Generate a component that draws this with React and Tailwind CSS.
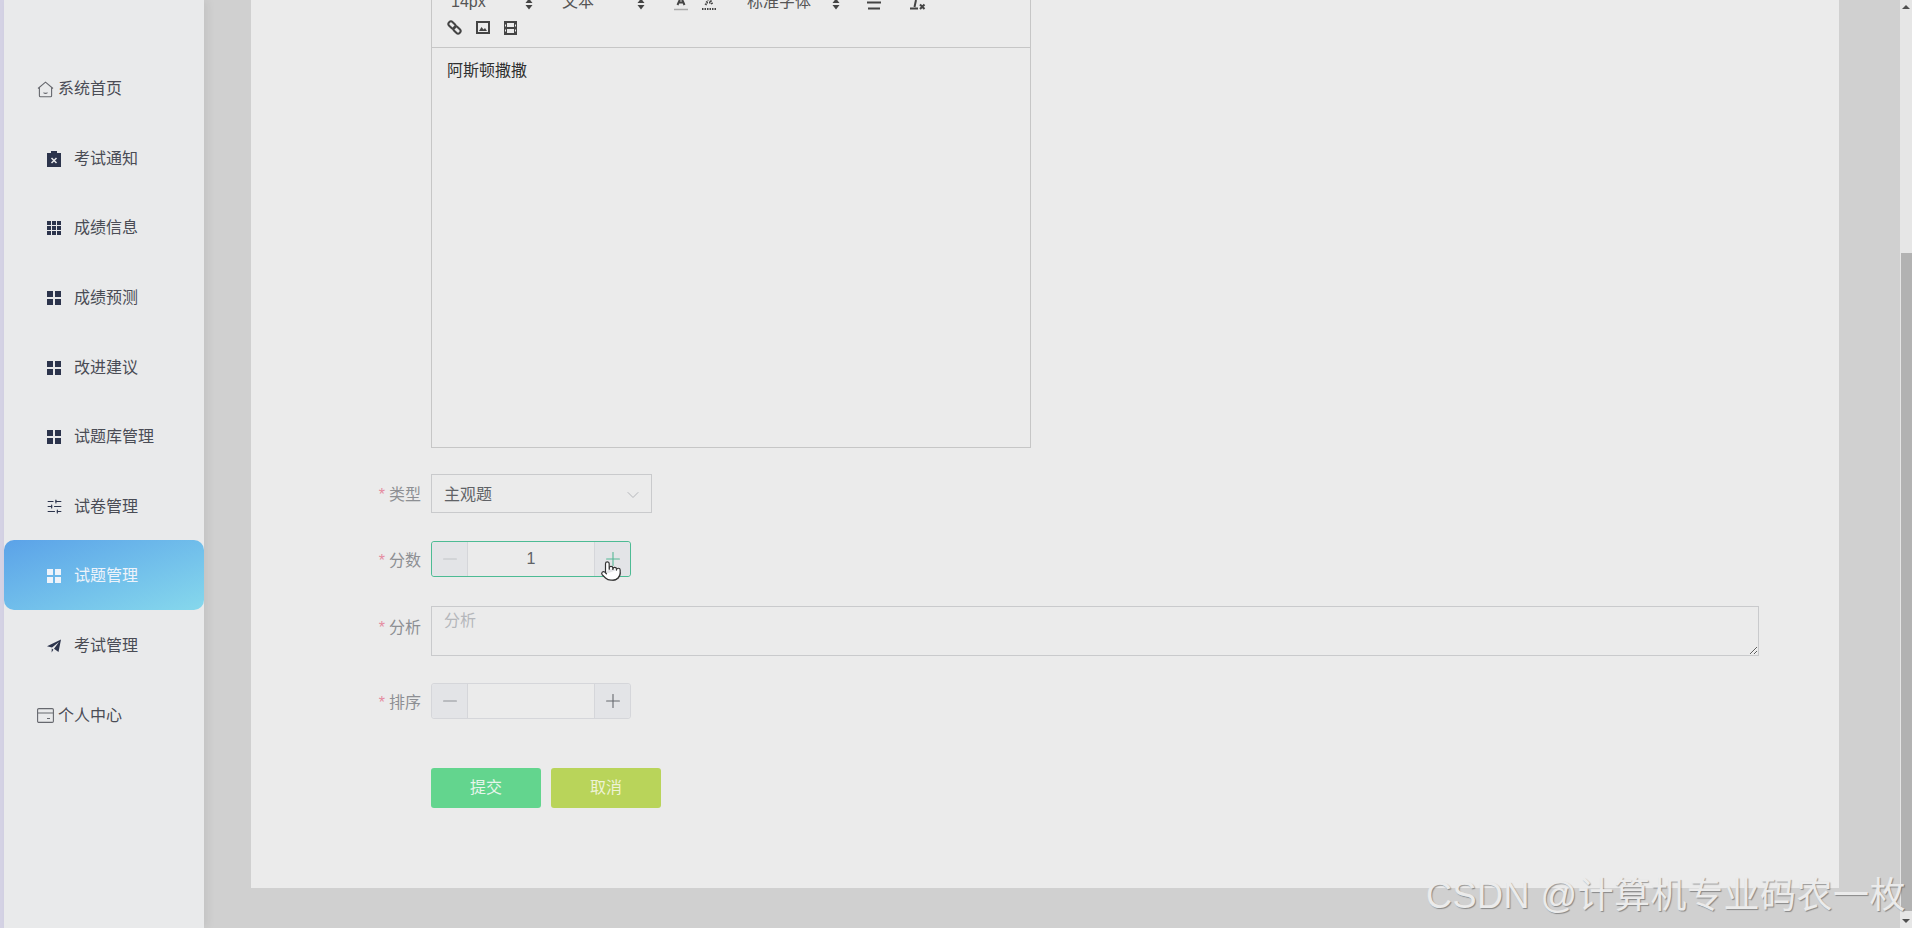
import { ChevronDown, Minus, Plus, Pointer, SlidersHorizontal } from 'lucide-react';

const fontStack = { fontFamily: '"Liberation Sans", "Noto Sans CJK SC", sans-serif' };

// 侧边栏小图标
const HomeIcon = () => (
  <svg width="17" height="17" viewBox="0 0 17 17" fill="none" stroke="#66686e" strokeWidth="1.1">
    <path d="M1 7.5 8.5 1.2 16 7.5M2.4 6.6v8.2c0 .6.4 1 1 1h10.200c.6 0 1-.4 1-1V6.6" />
    <path d="M6.5 11.6c1.2.9 2.8.9 4 0" />
  </svg>
);

const CardIcon = () => (
  <svg width="17" height="15" viewBox="0 0 17 15" fill="none" stroke="#66686e" strokeWidth="1.1">
    <rect x="0.6" y="0.6" width="15.8" height="13.8" rx="1.2" />
    <path d="M.6 5h15.8M10 10.5h3" />
  </svg>
);

const ClipboardIcon = () => (
  <svg width="14" height="16" viewBox="0 0 14 16">
    <path fill="#2c344c" d="M4 0h6v2h4v14H0V2h4z" />
    <path stroke="#e9eaeb" strokeWidth="1.5" d="m4.5 7 5 5m0-5-5 5" />
  </svg>
);

const GridNineIcon = () => (
  <svg width="14" height="14" viewBox="0 0 14 14" fill="#2c344c">
    {[0, 5, 10].map((y) =>
      [0, 5, 10].map((x) => <rect key={`${x}-${y}`} x={x} y={y} width="4" height="4" />)
    )}
  </svg>
);

const GridFourIcon = ({ color = '#2c344c' }) => (
  <svg width="14" height="14" viewBox="0 0 14 14" fill={color}>
    <rect width="6" height="6" />
    <rect x="8" width="6" height="6" />
    <rect y="8" width="6" height="6" />
    <rect x="8" y="8" width="6" height="6" />
  </svg>
);

const SendIcon = () => (
  <svg width="14" height="14" viewBox="0 0 14 14" fill="#2c344c">
    <path d="M14 .5 11.5 13 7 9.8 12 3 5 8.6 0 7.2zM4.8 9.6 6.4 10.8 4.6 13.4z" />
  </svg>
);

const menus = [
  { name: '系统首页', icon: <HomeIcon />, top: true },
  { name: '考试通知', icon: <ClipboardIcon /> },
  { name: '成绩信息', icon: <GridNineIcon /> },
  { name: '成绩预测', icon: <GridFourIcon /> },
  { name: '改进建议', icon: <GridFourIcon /> },
  { name: '试题库管理', icon: <GridFourIcon /> },
  { name: '试卷管理', icon: <SlidersHorizontal size={17} color="#2c344c" strokeWidth={1.6} /> },
  { name: '试题管理', icon: <GridFourIcon color="#eef3fa" />, active: true },
  { name: '考试管理', icon: <SendIcon /> },
  { name: '个人中心', icon: <CardIcon />, top: true },
];

const Sidebar = () => (
  <aside className="w-[200px] shrink-0 bg-[#e9eaeb] pt-[53px] flex flex-col shadow-[4px_0_8px_rgba(0,0,0,0.06)] z-10">
    {menus.map((it) => (
      <div
        key={it.name}
        className={`h-[69.6px] pt-[3px] flex items-center text-[16px] rounded-[10px] ${
          it.active
            ? 'bg-gradient-to-br from-[#5ba2e8] to-[#86d8ec] text-[#eef3fa]'
            : 'text-[#4a4c55]'
        } ${it.top ? 'pl-[33px] gap-[4px]' : 'pl-[39px]'}`}
      >
        <span className={`flex justify-center ${it.top ? '' : 'w-[22px] mr-[9px]'}`}>{it.icon}</span>
        {it.name}
      </div>
    ))}
  </aside>
);

const Sort = ({ className = '' }) => (
  <svg width="8" height="12" viewBox="0 0 8 12" fill="#444" className={`absolute top-[-2px] ${className}`}>
    <path d="M.5 5h7L4 .5zM.5 7h7L4 11.500z" />
  </svg>
);

const Toolbar = () => (
  <div className="h-[48px] border-b border-[#c6c6c6] relative text-[16px] text-[#555]">
    <span className="absolute left-[19px] top-[-10px]">14px</span>
    <Sort className="left-[93px]" />
    <span className="absolute left-[130px] top-[-10px]">文本</span>
    <Sort className="left-[205px]" />
    <svg width="16" height="14" viewBox="0 0 16 14" className="absolute left-[241px] top-[-3px]" fill="none" stroke="#444" strokeWidth="2">
      <path d="m4.500 8 3.500-8 3.500 8M5.500 5.500h5" />
      <path d="M1 12.500h14" stroke="#aaa" strokeWidth="1.500" />
    </svg>
    <svg width="16" height="14" viewBox="0 0 16 14" className="absolute left-[269px] top-[-3px]" fill="none" stroke="#444" strokeWidth="2" strokeDasharray="1.500 1">
      <path d="m4.500 8 3.500-8 3.500 8M5.500 5.500h5M1 12h14" />
    </svg>
    <span className="absolute left-[315px] top-[-10px]">标准字体</span>
    <Sort className="left-[400px]" />
    <svg width="14" height="12" viewBox="0 0 14 12" className="absolute left-[435px] top-0" stroke="#444" strokeWidth="2">
      <path d="M0 2.500h14M1 8.500h12" />
    </svg>
    <svg width="16" height="12" viewBox="0 0 16 12" className="absolute left-[478px] top-0" fill="none" stroke="#444" strokeWidth="2">
      <path d="M6 0 4.500 7M0 8.500h8M10 4.500l4.500 4.500m0-4.500L10 9" />
    </svg>
    <div className="absolute left-[15px] top-[20px] flex gap-[14px] items-center">
      <svg width="15" height="15" viewBox="0 0 15 15" fill="none" stroke="#444" strokeWidth="2">
        <rect x="1" y="2.500" width="8" height="5" rx="2.500" transform="rotate(45 5 5)" />
        <rect x="6" y="7.500" width="8" height="5" rx="2.500" transform="rotate(45 10 10)" />
      </svg>
      <svg width="14" height="13" viewBox="0 0 14 13">
        <rect x="1" y="1" width="12" height="11" fill="none" stroke="#444" strokeWidth="2" />
        <path fill="#444" d="M3 10 5.500 6 7.500 8.500 9 7l2 3z" />
      </svg>
      <svg width="13" height="14" viewBox="0 0 13 14" fill="#444">
        <path
          fillRule="evenodd"
          d="M0 0h13v14H0zM3 2v4h7V2zM3 8v4h7V8zM1 3.500v2h1v-2zM1 8.500v2h1v-2zM11 3.500v2h1v-2zM11 8.500v2h1v-2z"
        />
      </svg>
    </div>
  </div>
);

const Label = ({ children, className = '' }) => (
  <label className={`w-[91px] shrink-0 text-right pr-[10px] pt-[3px] text-[16px] text-[#8d8f93] ${className}`}>
    <span className="text-[#e58ba0] mr-[4px]">*</span>
    {children}
  </label>
);

const NumberInput = ({ value, focus }) => (
  <div
    className={`w-[200px] h-[36px] flex items-center border rounded-[3px] text-[16px] text-[#606266] ${
      focus ? 'border-[#4dbb94]' : 'border-[#d5d6da]'
    }`}
  >
    <span className="w-[36px] h-full flex items-center justify-center bg-[#e3e4e7] border-r border-[#d5d6da] rounded-l-[3px]">
      <Minus size={22} color={focus ? '#c2c4c8' : '#8f9197'} strokeWidth={1.200} />
    </span>
    <span className="flex-1 text-center">{value}</span>
    <span className="w-[36px] h-full flex items-center justify-center bg-[#e3e4e7] border-l border-[#d5d6da] rounded-r-[3px]">
      <Plus size={22} color={focus ? '#55b795' : '#66686e'} strokeWidth={1.200} />
    </span>
  </div>
);

const Form = () => (
  <section className="bg-[#ebebeb] flex-1 h-[888px] pl-[180px] pr-[80px] relative">
    <div className="w-[600px] h-[448px] border-x border-b border-[#c6c6c6]">
      <Toolbar />
      <p className="pl-[15px] pt-[11px] text-[16px] leading-[24px] text-[#303030]">阿斯顿撒撒</p>
    </div>

    <div className="flex items-center mt-[26px] -ml-[91px]">
      <Label>类型</Label>
      <div className="w-[221px] h-[39px] pt-[3px] border border-[#c9cacc] flex items-center justify-between pl-[12px] pr-[8px] text-[16px] text-[#606266]">
        主观题
        <ChevronDown size={20} color="#b5b7bb" strokeWidth={1.200} />
      </div>
    </div>

    <div className="flex items-center mt-[28px] -ml-[91px]">
      <Label>分数</Label>
      <NumberInput value="1" focus />
    </div>

    <div className="flex items-center mt-[29px] -ml-[91px]">
      <Label className="pb-[10px]">分析</Label>
      <textarea
        placeholder="分析"
        readOnly
        className="w-[1328px] h-[50px] border border-[#c9cacc] px-[12px] py-[4px] text-[16px] leading-[20px] placeholder:text-[#b5b7bb] outline-none"
      />
    </div>

    <div className="flex items-center mt-[27px] -ml-[91px]">
      <Label>排序</Label>
      <NumberInput />
    </div>

    <div className="flex gap-[10px] mt-[49px]">
      <button className="w-[110px] h-[40px] rounded-[3px] bg-[#63d58e] text-[16px] text-[#e8f5ec]">提交</button>
      <button className="w-[110px] h-[40px] rounded-[3px] bg-[#b9d45a] text-[16px] text-[#eef3d6]">取消</button>
    </div>

    <Pointer
      size={22}
      color="#333"
      fill="#fff"
      strokeWidth={1.300}
      className="absolute left-[349px] top-[560px]"
    />
  </section>
);

const App = () => (
  <div className="w-[1912px] h-[928px] overflow-hidden flex relative bg-[#d0d0d0]" style={fontStack}>
    <div className="w-[4px] shrink-0 bg-[#d4d2e4]" />
    <Sidebar />
    <main className="flex-1 pl-[47px] pr-[61px]">
      <Form />
    </main>
    <div className="w-[12px] shrink-0 bg-[#e6e6e6] flex flex-col items-center justify-between relative">
      <span className="w-0 h-0 mt-[5px] border-x-[4px] border-x-transparent border-b-[4px] border-b-[#505050]" />
      <span className="absolute left-[1px] right-0 top-[253px] h-[658px] bg-[#b2b2b2]" />
      <span className="w-0 h-0 mb-[5px] border-x-[4px] border-x-transparent border-t-[4px] border-t-[#505050]" />
    </div>
    <span className="absolute right-[6px] bottom-[10px] text-[36px] leading-[44px] tracking-[0.5px] text-[#ebebeb] [text-shadow:1px_1px_1px_rgba(0,0,0,0.35)]">
      CSDN @计算机专业码农一枚
    </span>
  </div>
);

export default App;
